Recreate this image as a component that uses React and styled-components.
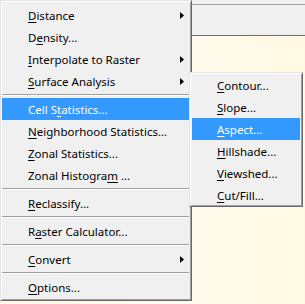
import React from "react";
import styled, { createGlobalStyle } from "styled-components";

const GlobalStyle = createGlobalStyle`
  html, body {
    margin: 0;
    padding: 0;
    background: #fffae8;
  }
  body {
    font-family: "Noto Sans", "Liberation Sans", sans-serif;
  }
`;

const Screen = styled.div`
  position: relative;
  width: 305px;
  height: 304px;
  overflow: hidden;
  display: flex;
  flex-direction: column;
  background: #f0f0f0;
`;

const TopGap = styled.div`
  height: 4px;
  background: #f0f0f0;
`;

const Toolbar = styled.div`
  height: 30px;
  background: #f0f0f0;
  border-top: 1px solid #a0a0a0;
  border-bottom: 1px solid #6d6d6d;
  box-shadow: 0 1px 0 #a9a9a9;
`;

const Canvas = styled.div`
  flex: 1;
  background: linear-gradient(90deg, #fff8e2 0%, #fffbec 60%, #fff9e4 100%);
`;

const Menu = styled.div`
  position: absolute;
  left: ${(p) => p.left}px;
  top: ${(p) => p.top}px;
  width: ${(p) => p.width}px;
  box-sizing: border-box;
  background: #f0f0f0;
  border-top: 1px solid #e3e3e3;
  border-left: 1px solid #e3e3e3;
  border-right: 1px solid #696969;
  border-bottom: 1px solid #696969;
  box-shadow: inset 1px 1px 0 #ffffff, inset -1px -1px 0 #a0a0a0;
  padding: ${(p) => p.pad};
  display: flex;
  flex-direction: column;
`;

const Item = styled.div`
  height: 22px;
  display: flex;
  align-items: center;
  padding-left: ${(p) => p.indent}px;
  font-size: 11.5px;
  color: ${(p) => (p.active ? "#ffffff" : "#000000")};
  background: ${(p) => (p.active ? "#3399ff" : "transparent")};
  white-space: nowrap;

  u {
    text-decoration-thickness: 1px;
    text-underline-offset: 2px;
  }
`;

const Arrow = styled.svg`
  margin-left: auto;
  margin-right: 5px;
`;

const Separator = styled.div`
  height: 6px;
  display: flex;
  flex-direction: column;
  justify-content: center;

  &::before {
    content: "";
    display: block;
    height: 1px;
    background: #a0a0a0;
    border-bottom: 1px solid #ffffff;
  }
`;

const Label = ({ text, key1 }) => {
  const i = text.indexOf(key1);
  return (
    <span>
      {text.slice(0, i)}
      <u>{key1}</u>
      {text.slice(i + key1.length)}
    </span>
  );
};

const mainItems = [
  { text: "Distance", key1: "D", sub: true },
  { text: "Density...", key1: "e", sub: false },
  { text: "Interpolate to Raster", key1: "I", sub: true },
  { text: "Surface Analysis", key1: "S", sub: true },
  "sep",
  { text: "Cell Statistics...", key1: "t", active: true },
  { text: "Neighborhood Statistics...", key1: "N" },
  { text: "Zonal Statistics...", key1: "Z" },
  { text: "Zonal Histogram ...", key1: "m" },
  "sep",
  { text: "Reclassify...", key1: "R" },
  "sep",
  { text: "Raster Calculator...", key1: "a" },
  "sep",
  { text: "Convert", key1: "C", sub: true },
  "sep",
  { text: "Options...", key1: "O" },
];

const surfaceItems = [
  { text: "Contour...", key1: "C" },
  { text: "Slope...", key1: "S" },
  { text: "Aspect...", key1: "A", active: true },
  { text: "Hillshade...", key1: "H" },
  { text: "Viewshed...", key1: "V" },
  { text: "Cut/Fill...", key1: "C" },
];

const SubArrow = () => (
  <Arrow width="4" height="7" viewBox="0 0 4 7">
    <polygon points="0,0 4,3.5 0,7" fill="#000" />
  </Arrow>
);

export default function App() {
  return (
    <>
      <GlobalStyle />
      <Screen>
        <TopGap />
        <Toolbar />
        <Canvas />

        <Menu left={0} top={0} width={192} pad="3px 2px 2px 1px">
          {mainItems.map((it, i) =>
            it === "sep" ? (
              <Separator key={i} />
            ) : (
              <Item key={i} indent={26} active={it.active}>
                <Label text={it.text} key1={it.key1} />
                {it.sub && <SubArrow />}
              </Item>
            )
          )}
        </Menu>

        <Menu left={189} top={72} width={114} pad="1px 2px 0px 2px">
          {surfaceItems.map((it, i) => (
            <Item key={i} indent={25} active={it.active}>
              <Label text={it.text} key1={it.key1} />
            </Item>
          ))}
        </Menu>
      </Screen>
    </>
  );
}
